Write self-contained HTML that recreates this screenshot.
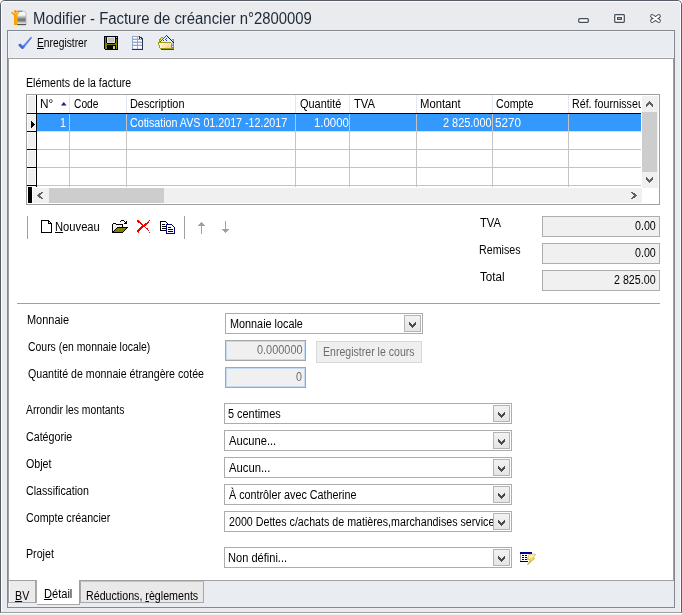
<!DOCTYPE html>
<html><head><meta charset="utf-8">
<style>
*{margin:0;padding:0;box-sizing:border-box}
html,body{width:682px;height:615px;overflow:hidden;background:#fdfdfd}
body{position:relative;font-family:"Liberation Sans",sans-serif;font-size:12px;color:#000}
#root{position:absolute;left:0;top:0;width:682px;height:615px;will-change:transform}
.a{position:absolute}
.t{position:absolute;white-space:nowrap;font-size:12px;line-height:14px;transform:scaleX(0.89);transform-origin:0 0}
.u{text-decoration:underline;text-underline-offset:1px}
.combo{position:absolute;height:21px;border:1px solid #acacb0;background:#fff}
.combo .btn{position:absolute;right:1px;top:1px;width:17px;height:17px;border:1px solid #b4b4b4;background:linear-gradient(#f2f2f2,#e5e5e5)}
.combo .btn svg{position:absolute;left:3px;top:5px}
.ro{position:absolute;height:21px;border:1px solid #abadb3;background:#f0f0f0}
.ro2{position:absolute;height:21px;border:1px solid #a3a6ab;background:#f0f0f0;box-shadow:inset 0 0 0 1px #c4daf2}
.hl{position:absolute;height:1px;background:#c4c4c4}
.vl{position:absolute;width:1px;background:#c4c4c4}
.vh{position:absolute;width:1px;background:#e2e8f0}
.blk{position:absolute;background:#000}
</style></head><body><div id="root">
<!-- window frame -->
<div class="a" style="left:0;top:0;width:682px;height:613px;background:#e9ebef;border:1px solid #565d67;border-bottom-color:#a0a0a0;border-radius:5px 5px 0 0"></div>
<div class="a" style="left:1px;top:1px;width:680px;height:611px;border:1px solid #fbfcfd;border-bottom:0;border-radius:4px 4px 0 0"></div>
<div class="a" style="left:0;top:614px;width:682px;height:1px;background:#efefef"></div>
<!-- title icon -->
<svg class="a" style="left:8px;top:6px" width="20" height="20" viewBox="0 0 20 20"><defs><linearGradient id="dg" x1="0" y1="0" x2="0" y2="1"><stop offset="0" stop-color="#ffffff"/><stop offset="0.3" stop-color="#f2f2f2"/><stop offset="0.5" stop-color="#9a9a9a"/><stop offset="0.65" stop-color="#6a6a6a"/><stop offset="0.85" stop-color="#d0d0d0"/><stop offset="1" stop-color="#eeeeee"/></linearGradient><linearGradient id="og" x1="0" y1="0" x2="1" y2="0"><stop offset="0" stop-color="#f08800"/><stop offset="1" stop-color="#ffbe00"/></linearGradient></defs><path d="M9 5h5.5c2.2 0 3.5 1.3 3.5 3.3V19H9z" fill="url(#dg)" stroke="#b4b4b4" stroke-width="0.8"/><path d="M9.5 5.3h5" stroke="#4f86d0" stroke-width="1"/><path d="M9 18.5h9" stroke="#555" stroke-width="1"/><path d="M3 6.4 L4 5.8 L6 7.6 H8.6 L10.6 5.8 L11.6 6.6 L9.2 9.2 V19 H6 V9.4 Z" fill="url(#og)"/><circle cx="7.4" cy="5.4" r="1.5" fill="#f59a00"/></svg>
<div class="a" style="left:33px;top:10px;font-size:16px;line-height:18px;white-space:nowrap;color:#1f2936;transform:scaleX(0.93);transform-origin:0 0">Modifier - Facture de créancier n°2800009</div>
<!-- title buttons -->
<svg class="a" style="left:577px;top:17px" width="13" height="7"><rect x="1.7" y="1.7" width="9.6" height="3.6" rx="1" fill="#fdfdfd" stroke="#474e5a" stroke-width="1.25"/></svg>
<svg class="a" style="left:613px;top:13px" width="13" height="11"><rect x="1.7" y="1.7" width="9.6" height="7.6" rx="0.8" fill="#f8f9fb" stroke="#474e5a" stroke-width="1.25"/><rect x="4.6" y="4.6" width="3.8" height="1.8" fill="#fff" stroke="#474e5a" stroke-width="1.2"/></svg>
<svg class="a" style="left:649px;top:13px" width="13" height="11"><path d="M3.2 3.2L9.8 7.8M9.8 3.2L3.2 7.8" stroke="#474e5a" stroke-width="4.1" stroke-linecap="round"/><path d="M3.2 3.2L9.8 7.8M9.8 3.2L3.2 7.8" stroke="#fff" stroke-width="2.2" stroke-linecap="round"/></svg>

<!-- inner frame -->
<div class="a" style="left:7px;top:30px;width:668px;height:578px;border:1px solid #84898f;background:#e9ecf0"></div>
<div class="a" style="left:8px;top:31px;width:666px;height:27px;border:1px solid #eff2f7;border-right-color:#eef1f6"></div>
<!-- toolbar -->
<svg class="a" style="left:14px;top:33px" width="22" height="20" viewBox="0 0 22 20"><defs><linearGradient id="cg" x1="0" y1="1" x2="1" y2="0"><stop offset="0" stop-color="#2a48b8"/><stop offset="0.45" stop-color="#5f8cf0"/><stop offset="1" stop-color="#3a64d8"/></linearGradient></defs><path d="M4.2 12.2 C4.6 10.8 6 10.2 7.1 11 L8.7 12.7 L16.6 4.3 C17.3 3.6 18.2 4.2 17.7 5 L9.9 15.3 C9.2 16.2 8.1 16.2 7.4 15.4 Z" fill="url(#cg)"/></svg>
<svg class="a" style="left:104px;top:36px" width="14" height="14" shape-rendering="crispEdges"><rect x="0" y="0" width="14" height="1" fill="#000"/><rect x="0" y="1" width="1" height="1" fill="#000"/><rect x="1" y="1" width="1" height="1" fill="#808000"/><rect x="2" y="1" width="1" height="1" fill="#000"/><rect x="3" y="1" width="8" height="1" fill="#e0e0e0"/><rect x="11" y="1" width="1" height="1" fill="#000"/><rect x="12" y="1" width="1" height="1" fill="#c0c0c0"/><rect x="13" y="1" width="1" height="1" fill="#000"/><rect x="0" y="2" width="1" height="1" fill="#000"/><rect x="1" y="2" width="1" height="1" fill="#808000"/><rect x="2" y="2" width="1" height="1" fill="#000"/><rect x="3" y="2" width="1" height="1" fill="#e0e0e0"/><rect x="4" y="2" width="6" height="1" fill="#c0c0c0"/><rect x="10" y="2" width="1" height="1" fill="#e0e0e0"/><rect x="11" y="2" width="3" height="1" fill="#000"/><rect x="0" y="3" width="1" height="1" fill="#000"/><rect x="1" y="3" width="1" height="1" fill="#808000"/><rect x="2" y="3" width="1" height="1" fill="#000"/><rect x="3" y="3" width="1" height="1" fill="#e0e0e0"/><rect x="4" y="3" width="6" height="1" fill="#c0c0c0"/><rect x="10" y="3" width="1" height="1" fill="#e0e0e0"/><rect x="11" y="3" width="1" height="1" fill="#000"/><rect x="12" y="3" width="1" height="1" fill="#808000"/><rect x="13" y="3" width="1" height="1" fill="#000"/><rect x="0" y="4" width="1" height="1" fill="#000"/><rect x="1" y="4" width="1" height="1" fill="#808000"/><rect x="2" y="4" width="1" height="1" fill="#000"/><rect x="3" y="4" width="1" height="1" fill="#e0e0e0"/><rect x="4" y="4" width="6" height="1" fill="#c0c0c0"/><rect x="10" y="4" width="1" height="1" fill="#e0e0e0"/><rect x="11" y="4" width="1" height="1" fill="#000"/><rect x="12" y="4" width="1" height="1" fill="#808000"/><rect x="13" y="4" width="1" height="1" fill="#000"/><rect x="0" y="5" width="1" height="1" fill="#000"/><rect x="1" y="5" width="1" height="1" fill="#808000"/><rect x="2" y="5" width="1" height="1" fill="#000"/><rect x="3" y="5" width="1" height="1" fill="#e0e0e0"/><rect x="4" y="5" width="6" height="1" fill="#c0c0c0"/><rect x="10" y="5" width="1" height="1" fill="#e0e0e0"/><rect x="11" y="5" width="1" height="1" fill="#000"/><rect x="12" y="5" width="1" height="1" fill="#808000"/><rect x="13" y="5" width="1" height="1" fill="#000"/><rect x="0" y="6" width="1" height="1" fill="#000"/><rect x="1" y="6" width="1" height="1" fill="#808000"/><rect x="2" y="6" width="1" height="1" fill="#000"/><rect x="3" y="6" width="8" height="1" fill="#e0e0e0"/><rect x="11" y="6" width="1" height="1" fill="#000"/><rect x="12" y="6" width="1" height="1" fill="#808000"/><rect x="13" y="6" width="1" height="1" fill="#000"/><rect x="0" y="7" width="1" height="1" fill="#000"/><rect x="1" y="7" width="2" height="1" fill="#808000"/><rect x="3" y="7" width="8" height="1" fill="#000"/><rect x="11" y="7" width="2" height="1" fill="#808000"/><rect x="13" y="7" width="1" height="1" fill="#000"/><rect x="0" y="8" width="1" height="1" fill="#000"/><rect x="1" y="8" width="12" height="1" fill="#808000"/><rect x="13" y="8" width="1" height="1" fill="#000"/><rect x="0" y="9" width="1" height="1" fill="#000"/><rect x="1" y="9" width="2" height="1" fill="#808000"/><rect x="3" y="9" width="9" height="1" fill="#000"/><rect x="12" y="9" width="1" height="1" fill="#808000"/><rect x="13" y="9" width="1" height="1" fill="#000"/><rect x="0" y="10" width="1" height="1" fill="#000"/><rect x="1" y="10" width="2" height="1" fill="#808000"/><rect x="3" y="10" width="6" height="1" fill="#000"/><rect x="9" y="10" width="2" height="1" fill="#c0c0c0"/><rect x="11" y="10" width="1" height="1" fill="#000"/><rect x="12" y="10" width="1" height="1" fill="#808000"/><rect x="13" y="10" width="1" height="1" fill="#000"/><rect x="0" y="11" width="1" height="1" fill="#000"/><rect x="1" y="11" width="2" height="1" fill="#808000"/><rect x="3" y="11" width="6" height="1" fill="#000"/><rect x="9" y="11" width="2" height="1" fill="#c0c0c0"/><rect x="11" y="11" width="1" height="1" fill="#000"/><rect x="12" y="11" width="1" height="1" fill="#808000"/><rect x="13" y="11" width="1" height="1" fill="#000"/><rect x="0" y="12" width="1" height="1" fill="#000"/><rect x="1" y="12" width="2" height="1" fill="#808000"/><rect x="3" y="12" width="6" height="1" fill="#000"/><rect x="9" y="12" width="2" height="1" fill="#c0c0c0"/><rect x="11" y="12" width="1" height="1" fill="#000"/><rect x="12" y="12" width="1" height="1" fill="#808000"/><rect x="13" y="12" width="1" height="1" fill="#000"/><rect x="1" y="13" width="13" height="1" fill="#000"/></svg>
<svg class="a" style="left:132px;top:36px" width="11" height="14" shape-rendering="crispEdges"><rect x="0" y="0" width="7" height="1" fill="#93a6c6"/><rect x="7" y="0" width="1" height="1" fill="#26354f"/><rect x="0" y="1" width="1" height="1" fill="#93a6c6"/><rect x="1" y="1" width="4" height="1" fill="#ffffff"/><rect x="5" y="1" width="1" height="1" fill="#93a6c6"/><rect x="6" y="1" width="1" height="1" fill="#ffffff"/><rect x="7" y="1" width="3" height="1" fill="#26354f"/><rect x="0" y="2" width="1" height="1" fill="#93a6c6"/><rect x="1" y="2" width="4" height="1" fill="#dcdcf6"/><rect x="5" y="2" width="1" height="1" fill="#93a6c6"/><rect x="6" y="2" width="1" height="1" fill="#dcdcf6"/><rect x="7" y="2" width="1" height="1" fill="#26354f"/><rect x="8" y="2" width="1" height="1" fill="#ffffff"/><rect x="9" y="2" width="2" height="1" fill="#26354f"/><rect x="0" y="3" width="10" height="1" fill="#93a6c6"/><rect x="10" y="3" width="1" height="1" fill="#26354f"/><rect x="0" y="4" width="1" height="1" fill="#93a6c6"/><rect x="1" y="4" width="4" height="1" fill="#ffffff"/><rect x="5" y="4" width="1" height="1" fill="#93a6c6"/><rect x="6" y="4" width="4" height="1" fill="#ffffff"/><rect x="10" y="4" width="1" height="1" fill="#26354f"/><rect x="0" y="5" width="1" height="1" fill="#93a6c6"/><rect x="1" y="5" width="4" height="1" fill="#dcdcf6"/><rect x="5" y="5" width="1" height="1" fill="#93a6c6"/><rect x="6" y="5" width="4" height="1" fill="#dcdcf6"/><rect x="10" y="5" width="1" height="1" fill="#26354f"/><rect x="0" y="6" width="10" height="1" fill="#93a6c6"/><rect x="10" y="6" width="1" height="1" fill="#26354f"/><rect x="0" y="7" width="1" height="1" fill="#93a6c6"/><rect x="1" y="7" width="4" height="1" fill="#ffffff"/><rect x="5" y="7" width="1" height="1" fill="#93a6c6"/><rect x="6" y="7" width="4" height="1" fill="#ffffff"/><rect x="10" y="7" width="1" height="1" fill="#26354f"/><rect x="0" y="8" width="1" height="1" fill="#93a6c6"/><rect x="1" y="8" width="4" height="1" fill="#dcdcf6"/><rect x="5" y="8" width="1" height="1" fill="#93a6c6"/><rect x="6" y="8" width="4" height="1" fill="#dcdcf6"/><rect x="10" y="8" width="1" height="1" fill="#26354f"/><rect x="0" y="9" width="10" height="1" fill="#93a6c6"/><rect x="10" y="9" width="1" height="1" fill="#26354f"/><rect x="0" y="10" width="1" height="1" fill="#93a6c6"/><rect x="1" y="10" width="4" height="1" fill="#ffffff"/><rect x="5" y="10" width="1" height="1" fill="#93a6c6"/><rect x="6" y="10" width="4" height="1" fill="#ffffff"/><rect x="10" y="10" width="1" height="1" fill="#26354f"/><rect x="0" y="11" width="1" height="1" fill="#93a6c6"/><rect x="1" y="11" width="4" height="1" fill="#ffffff"/><rect x="5" y="11" width="1" height="1" fill="#93a6c6"/><rect x="6" y="11" width="4" height="1" fill="#ffffff"/><rect x="10" y="11" width="1" height="1" fill="#26354f"/><rect x="0" y="12" width="1" height="1" fill="#93a6c6"/><rect x="1" y="12" width="4" height="1" fill="#dcdcf6"/><rect x="5" y="12" width="1" height="1" fill="#93a6c6"/><rect x="6" y="12" width="4" height="1" fill="#dcdcf6"/><rect x="10" y="12" width="1" height="1" fill="#26354f"/><rect x="0" y="13" width="11" height="1" fill="#26354f"/></svg>
<svg class="a" style="left:158px;top:35px" width="16" height="15" shape-rendering="crispEdges"><rect x="8" y="0" width="1" height="1" fill="#3a3acc"/><rect x="7" y="1" width="1" height="1" fill="#3a3acc"/><rect x="8" y="1" width="1" height="1" fill="#dcf6ff"/><rect x="9" y="1" width="1" height="1" fill="#101010"/><rect x="3" y="2" width="2" height="1" fill="#9c9c10"/><rect x="6" y="2" width="1" height="1" fill="#3a3acc"/><rect x="7" y="2" width="3" height="1" fill="#dcf6ff"/><rect x="10" y="2" width="1" height="1" fill="#101010"/><rect x="2" y="3" width="1" height="1" fill="#9c9c10"/><rect x="3" y="3" width="2" height="1" fill="#f4e878"/><rect x="5" y="3" width="1" height="1" fill="#3a3acc"/><rect x="6" y="3" width="2" height="1" fill="#dcf6ff"/><rect x="8" y="3" width="1" height="1" fill="#3a3acc"/><rect x="9" y="3" width="2" height="1" fill="#dcf6ff"/><rect x="11" y="3" width="1" height="1" fill="#101010"/><rect x="1" y="4" width="2" height="1" fill="#9c9c10"/><rect x="3" y="4" width="1" height="1" fill="#f4e878"/><rect x="4" y="4" width="1" height="1" fill="#3a3acc"/><rect x="5" y="4" width="2" height="1" fill="#dcf6ff"/><rect x="7" y="4" width="1" height="1" fill="#3a3acc"/><rect x="8" y="4" width="4" height="1" fill="#dcf6ff"/><rect x="12" y="4" width="1" height="1" fill="#101010"/><rect x="14" y="4" width="2" height="1" fill="#9c9c10"/><rect x="1" y="5" width="1" height="1" fill="#9c9c10"/><rect x="2" y="5" width="1" height="1" fill="#f4e878"/><rect x="3" y="5" width="1" height="1" fill="#3a3acc"/><rect x="4" y="5" width="1" height="1" fill="#dcf6ff"/><rect x="5" y="5" width="1" height="1" fill="#3a3acc"/><rect x="6" y="5" width="2" height="1" fill="#dcf6ff"/><rect x="8" y="5" width="1" height="1" fill="#3a3acc"/><rect x="9" y="5" width="4" height="1" fill="#dcf6ff"/><rect x="13" y="5" width="1" height="1" fill="#101010"/><rect x="15" y="5" width="1" height="1" fill="#9c9c10"/><rect x="1" y="6" width="1" height="1" fill="#9c9c10"/><rect x="2" y="6" width="1" height="1" fill="#3a3acc"/><rect x="3" y="6" width="11" height="1" fill="#dcf6ff"/><rect x="14" y="6" width="1" height="1" fill="#101010"/><rect x="15" y="6" width="1" height="1" fill="#9c9c10"/><rect x="0" y="7" width="13" height="1" fill="#9c9c10"/><rect x="13" y="7" width="1" height="1" fill="#dcf6ff"/><rect x="14" y="7" width="1" height="1" fill="#c8c8f8"/><rect x="15" y="7" width="1" height="1" fill="#101010"/><rect x="0" y="8" width="1" height="1" fill="#9c9c10"/><rect x="1" y="8" width="6" height="1" fill="#fff6c0"/><rect x="7" y="8" width="1" height="1" fill="#fcd8a8"/><rect x="8" y="8" width="1" height="1" fill="#fff6c0"/><rect x="9" y="8" width="1" height="1" fill="#fcd8a8"/><rect x="10" y="8" width="1" height="1" fill="#fff6c0"/><rect x="11" y="8" width="1" height="1" fill="#fcd8a8"/><rect x="12" y="8" width="1" height="1" fill="#fff6c0"/><rect x="13" y="8" width="1" height="1" fill="#9c9c10"/><rect x="14" y="8" width="1" height="1" fill="#c8c8f8"/><rect x="15" y="8" width="1" height="1" fill="#9c9c10"/><rect x="0" y="9" width="1" height="1" fill="#9c9c10"/><rect x="1" y="9" width="5" height="1" fill="#fff6c0"/><rect x="6" y="9" width="1" height="1" fill="#fcd8a8"/><rect x="7" y="9" width="1" height="1" fill="#fff6c0"/><rect x="8" y="9" width="1" height="1" fill="#fcd8a8"/><rect x="9" y="9" width="1" height="1" fill="#fff6c0"/><rect x="10" y="9" width="2" height="1" fill="#fcd8a8"/><rect x="12" y="9" width="1" height="1" fill="#fff6c0"/><rect x="13" y="9" width="1" height="1" fill="#9c9c10"/><rect x="14" y="9" width="1" height="1" fill="#c8c8f8"/><rect x="15" y="9" width="1" height="1" fill="#9c9c10"/><rect x="1" y="10" width="1" height="1" fill="#9c9c10"/><rect x="2" y="10" width="3" height="1" fill="#fff6c0"/><rect x="5" y="10" width="1" height="1" fill="#fcd8a8"/><rect x="6" y="10" width="1" height="1" fill="#fff6c0"/><rect x="7" y="10" width="1" height="1" fill="#fcd8a8"/><rect x="8" y="10" width="1" height="1" fill="#fff6c0"/><rect x="9" y="10" width="4" height="1" fill="#fcd8a8"/><rect x="13" y="10" width="3" height="1" fill="#9c9c10"/><rect x="1" y="11" width="1" height="1" fill="#9c9c10"/><rect x="2" y="11" width="2" height="1" fill="#fff6c0"/><rect x="4" y="11" width="1" height="1" fill="#fcd8a8"/><rect x="5" y="11" width="1" height="1" fill="#fff6c0"/><rect x="6" y="11" width="1" height="1" fill="#fcd8a8"/><rect x="7" y="11" width="1" height="1" fill="#fff6c0"/><rect x="8" y="11" width="5" height="1" fill="#fcd8a8"/><rect x="13" y="11" width="1" height="1" fill="#9c9c10"/><rect x="15" y="11" width="1" height="1" fill="#9c9c10"/><rect x="1" y="12" width="1" height="1" fill="#9c9c10"/><rect x="2" y="12" width="3" height="1" fill="#fff6c0"/><rect x="5" y="12" width="1" height="1" fill="#fcd8a8"/><rect x="6" y="12" width="1" height="1" fill="#fff6c0"/><rect x="7" y="12" width="6" height="1" fill="#fcd8a8"/><rect x="13" y="12" width="3" height="1" fill="#9c9c10"/><rect x="2" y="13" width="14" height="1" fill="#9c9c10"/><rect x="3" y="14" width="13" height="1" fill="#4c4c08"/></svg>

<!-- client area -->
<div class="a" style="left:8px;top:58px;width:666px;height:523px;border:1px solid #a0a0a0;background:#fff"></div>

<!-- grid -->
<div class="a" style="left:26px;top:94px;width:634px;height:111px;border:1px solid #a0a0a0;background:#fff"></div>
<div class="a" style="left:27px;top:95px;width:9px;height:92px;background:#f0f0f0"></div>
<div class="a" style="left:27px;top:95px;width:9px;height:18px;border-left:1px solid #fff;border-top:1px solid #fff;border-right:1px solid #fafafa;border-bottom:1px solid #fafafa"></div>
<div class="a" style="left:27px;top:114px;width:9px;height:17px;border-left:1px solid #fff;border-top:1px solid #fff;border-right:1px solid #fafafa;border-bottom:1px solid #fafafa"></div>
<div class="a" style="left:27px;top:132px;width:9px;height:17px;border-left:1px solid #fff;border-top:1px solid #fff;border-right:1px solid #fafafa;border-bottom:1px solid #fafafa"></div>
<div class="a" style="left:27px;top:150px;width:9px;height:17px;border-left:1px solid #fff;border-top:1px solid #fff;border-right:1px solid #fafafa;border-bottom:1px solid #fafafa"></div>
<div class="a" style="left:27px;top:168px;width:9px;height:17px;border-left:1px solid #fff;border-top:1px solid #fff;border-right:1px solid #fafafa;border-bottom:1px solid #fafafa"></div>
<div class="blk" style="left:36px;top:95px;width:1px;height:92px"></div>
<div class="blk" style="left:27px;top:113px;width:614px;height:1px"></div>
<div class="blk" style="left:27px;top:131px;width:10px;height:1px"></div>
<div class="blk" style="left:27px;top:149px;width:10px;height:1px"></div>
<div class="blk" style="left:27px;top:167px;width:10px;height:1px"></div>
<div class="blk" style="left:27px;top:185px;width:10px;height:1px"></div>
<div class="a" style="left:37px;top:114px;width:604px;height:17px;background:#3399ff"></div>
<svg class="a" style="left:31px;top:121px" width="5" height="7" shape-rendering="crispEdges"><rect x="0" y="0" width="1" height="1" fill="#000"/><rect x="0" y="1" width="2" height="1" fill="#000"/><rect x="0" y="2" width="3" height="1" fill="#000"/><rect x="0" y="3" width="4" height="1" fill="#000"/><rect x="0" y="4" width="3" height="1" fill="#000"/><rect x="0" y="5" width="2" height="1" fill="#000"/><rect x="0" y="6" width="1" height="1" fill="#000"/></svg>
<div class="hl" style="left:37px;top:131px;width:604px;background:#e0dcd8"></div>
<div class="hl" style="left:37px;top:149px;width:604px"></div>
<div class="hl" style="left:37px;top:167px;width:604px"></div>
<div class="hl" style="left:37px;top:185px;width:604px"></div>
<div class="vh" style="left:69px;top:95px;height:18px"></div>
<div class="vh" style="left:126px;top:95px;height:18px"></div>
<div class="vh" style="left:295px;top:95px;height:18px"></div>
<div class="vh" style="left:349px;top:95px;height:18px"></div>
<div class="vh" style="left:416px;top:95px;height:18px"></div>
<div class="vh" style="left:492px;top:95px;height:18px"></div>
<div class="vh" style="left:568px;top:95px;height:18px"></div>
<div class="vl" style="left:69px;top:114px;height:73px"></div>
<div class="vl" style="left:126px;top:114px;height:73px"></div>
<div class="vl" style="left:295px;top:114px;height:73px"></div>
<div class="vl" style="left:349px;top:114px;height:73px"></div>
<div class="vl" style="left:416px;top:114px;height:73px"></div>
<div class="vl" style="left:492px;top:114px;height:73px"></div>
<div class="vl" style="left:568px;top:114px;height:73px"></div>
<svg class="a" style="left:61px;top:102px" width="6" height="4"><path d="M0 3.5h5.5L2.75 0z" fill="#1a1a8a"/></svg>
<div class="a" style="left:569px;top:95px;width:72px;height:18px;overflow:hidden"><div class="t" style="left:3px;top:2px">Réf. fournisseur</div></div>
<!-- vertical scrollbar -->
<div class="a" style="left:642px;top:96px;width:16px;height:92px;background:#f0f0f0"></div>
<div class="a" style="left:642px;top:112px;width:15px;height:60px;background:#cdcdcd"></div>
<svg class="a" style="left:646px;top:101px" width="7" height="6" shape-rendering="crispEdges"><rect x="3" y="0" width="1" height="1" fill="#606060"/><rect x="2" y="1" width="3" height="1" fill="#606060"/><rect x="1" y="2" width="5" height="1" fill="#606060"/><rect x="0" y="3" width="3" height="1" fill="#606060"/><rect x="4" y="3" width="3" height="1" fill="#606060"/><rect x="0" y="4" width="2" height="1" fill="#606060"/><rect x="5" y="4" width="2" height="1" fill="#606060"/><rect x="0" y="5" width="1" height="1" fill="#606060"/><rect x="6" y="5" width="1" height="1" fill="#606060"/></svg>
<svg class="a" style="left:646px;top:177px" width="7" height="6" shape-rendering="crispEdges"><rect x="0" y="0" width="1" height="1" fill="#606060"/><rect x="6" y="0" width="1" height="1" fill="#606060"/><rect x="0" y="1" width="2" height="1" fill="#606060"/><rect x="5" y="1" width="2" height="1" fill="#606060"/><rect x="0" y="2" width="3" height="1" fill="#606060"/><rect x="4" y="2" width="3" height="1" fill="#606060"/><rect x="1" y="3" width="5" height="1" fill="#606060"/><rect x="2" y="4" width="3" height="1" fill="#606060"/><rect x="3" y="5" width="1" height="1" fill="#606060"/></svg>
<!-- horizontal scrollbar -->
<div class="a" style="left:33px;top:188px;width:609px;height:15px;background:#f0f0f0"></div>
<div class="a" style="left:27px;top:187px;width:6px;height:17px;background:#fff"></div><div class="blk" style="left:28px;top:187px;width:4px;height:16px"></div>
<div class="a" style="left:49px;top:188px;width:115px;height:15px;background:#cdcdcd"></div>
<svg class="a" style="left:37px;top:192px" width="6" height="7" shape-rendering="crispEdges"><rect x="4" y="0" width="2" height="1" fill="#606060"/><rect x="2" y="1" width="3" height="1" fill="#606060"/><rect x="1" y="2" width="3" height="1" fill="#606060"/><rect x="0" y="3" width="3" height="1" fill="#606060"/><rect x="1" y="4" width="3" height="1" fill="#606060"/><rect x="2" y="5" width="3" height="1" fill="#606060"/><rect x="4" y="6" width="2" height="1" fill="#606060"/></svg>
<svg class="a" style="left:631px;top:192px" width="6" height="7" shape-rendering="crispEdges"><rect x="0" y="0" width="2" height="1" fill="#606060"/><rect x="1" y="1" width="3" height="1" fill="#606060"/><rect x="2" y="2" width="3" height="1" fill="#606060"/><rect x="3" y="3" width="3" height="1" fill="#606060"/><rect x="2" y="4" width="3" height="1" fill="#606060"/><rect x="1" y="5" width="3" height="1" fill="#606060"/><rect x="0" y="6" width="2" height="1" fill="#606060"/></svg>

<!-- grid toolbar -->
<div class="a" style="left:27px;top:216px;width:1px;height:23px;background:#a0a0a0"></div>
<svg class="a" style="left:41px;top:220px" width="11" height="13" shape-rendering="crispEdges"><rect x="0" y="0" width="8" height="1" fill="#000"/><rect x="8" y="0" width="3" height="1" fill="#fff"/><rect x="0" y="1" width="1" height="1" fill="#000"/><rect x="1" y="1" width="6" height="1" fill="#fff"/><rect x="7" y="1" width="2" height="1" fill="#000"/><rect x="9" y="1" width="2" height="1" fill="#fff"/><rect x="0" y="2" width="1" height="1" fill="#000"/><rect x="1" y="2" width="6" height="1" fill="#fff"/><rect x="7" y="2" width="1" height="1" fill="#000"/><rect x="8" y="2" width="1" height="1" fill="#fff"/><rect x="9" y="2" width="1" height="1" fill="#000"/><rect x="10" y="2" width="1" height="1" fill="#fff"/><rect x="0" y="3" width="1" height="1" fill="#000"/><rect x="1" y="3" width="6" height="1" fill="#fff"/><rect x="7" y="3" width="4" height="1" fill="#000"/><rect x="0" y="4" width="1" height="1" fill="#000"/><rect x="1" y="4" width="9" height="1" fill="#fff"/><rect x="10" y="4" width="1" height="1" fill="#000"/><rect x="0" y="5" width="1" height="1" fill="#000"/><rect x="1" y="5" width="9" height="1" fill="#fff"/><rect x="10" y="5" width="1" height="1" fill="#000"/><rect x="0" y="6" width="1" height="1" fill="#000"/><rect x="1" y="6" width="9" height="1" fill="#fff"/><rect x="10" y="6" width="1" height="1" fill="#000"/><rect x="0" y="7" width="1" height="1" fill="#000"/><rect x="1" y="7" width="9" height="1" fill="#fff"/><rect x="10" y="7" width="1" height="1" fill="#000"/><rect x="0" y="8" width="1" height="1" fill="#000"/><rect x="1" y="8" width="9" height="1" fill="#fff"/><rect x="10" y="8" width="1" height="1" fill="#000"/><rect x="0" y="9" width="1" height="1" fill="#000"/><rect x="1" y="9" width="9" height="1" fill="#fff"/><rect x="10" y="9" width="1" height="1" fill="#000"/><rect x="0" y="10" width="1" height="1" fill="#000"/><rect x="1" y="10" width="9" height="1" fill="#fff"/><rect x="10" y="10" width="1" height="1" fill="#000"/><rect x="0" y="11" width="1" height="1" fill="#000"/><rect x="1" y="11" width="9" height="1" fill="#fff"/><rect x="10" y="11" width="1" height="1" fill="#000"/><rect x="0" y="12" width="11" height="1" fill="#000"/></svg>
<svg class="a" style="left:112px;top:220px" width="16" height="13" shape-rendering="crispEdges"><rect x="9" y="0" width="3" height="1" fill="#000"/><rect x="8" y="1" width="1" height="1" fill="#000"/><rect x="12" y="1" width="1" height="1" fill="#000"/><rect x="14" y="1" width="1" height="1" fill="#000"/><rect x="13" y="2" width="2" height="1" fill="#000"/><rect x="1" y="3" width="3" height="1" fill="#000"/><rect x="12" y="3" width="3" height="1" fill="#000"/><rect x="0" y="4" width="1" height="1" fill="#000"/><rect x="1" y="4" width="1" height="1" fill="#ffff00"/><rect x="2" y="4" width="1" height="1" fill="#ffffff"/><rect x="3" y="4" width="1" height="1" fill="#ffff00"/><rect x="4" y="4" width="7" height="1" fill="#000"/><rect x="0" y="5" width="1" height="1" fill="#000"/><rect x="1" y="5" width="1" height="1" fill="#ffffff"/><rect x="2" y="5" width="1" height="1" fill="#ffff00"/><rect x="3" y="5" width="1" height="1" fill="#ffffff"/><rect x="4" y="5" width="1" height="1" fill="#ffff00"/><rect x="5" y="5" width="1" height="1" fill="#ffffff"/><rect x="6" y="5" width="1" height="1" fill="#ffff00"/><rect x="7" y="5" width="1" height="1" fill="#ffffff"/><rect x="8" y="5" width="1" height="1" fill="#ffff00"/><rect x="9" y="5" width="1" height="1" fill="#ffffff"/><rect x="10" y="5" width="1" height="1" fill="#000"/><rect x="0" y="6" width="1" height="1" fill="#000"/><rect x="1" y="6" width="1" height="1" fill="#ffff00"/><rect x="2" y="6" width="1" height="1" fill="#ffffff"/><rect x="3" y="6" width="1" height="1" fill="#ffff00"/><rect x="4" y="6" width="1" height="1" fill="#ffffff"/><rect x="5" y="6" width="1" height="1" fill="#ffff00"/><rect x="6" y="6" width="1" height="1" fill="#ffffff"/><rect x="7" y="6" width="1" height="1" fill="#ffff00"/><rect x="8" y="6" width="1" height="1" fill="#ffffff"/><rect x="9" y="6" width="1" height="1" fill="#ffff00"/><rect x="10" y="6" width="1" height="1" fill="#000"/><rect x="0" y="7" width="1" height="1" fill="#000"/><rect x="1" y="7" width="1" height="1" fill="#ffffff"/><rect x="2" y="7" width="1" height="1" fill="#ffff00"/><rect x="3" y="7" width="1" height="1" fill="#ffffff"/><rect x="4" y="7" width="1" height="1" fill="#ffff00"/><rect x="5" y="7" width="11" height="1" fill="#000"/><rect x="0" y="8" width="1" height="1" fill="#000"/><rect x="1" y="8" width="1" height="1" fill="#ffff00"/><rect x="2" y="8" width="1" height="1" fill="#ffffff"/><rect x="3" y="8" width="1" height="1" fill="#ffff00"/><rect x="4" y="8" width="1" height="1" fill="#000"/><rect x="5" y="8" width="9" height="1" fill="#808000"/><rect x="14" y="8" width="1" height="1" fill="#000"/><rect x="0" y="9" width="1" height="1" fill="#000"/><rect x="1" y="9" width="1" height="1" fill="#ffffff"/><rect x="2" y="9" width="1" height="1" fill="#ffff00"/><rect x="3" y="9" width="1" height="1" fill="#000"/><rect x="4" y="9" width="9" height="1" fill="#808000"/><rect x="13" y="9" width="1" height="1" fill="#000"/><rect x="0" y="10" width="1" height="1" fill="#000"/><rect x="1" y="10" width="1" height="1" fill="#ffff00"/><rect x="2" y="10" width="1" height="1" fill="#000"/><rect x="3" y="10" width="9" height="1" fill="#808000"/><rect x="12" y="10" width="1" height="1" fill="#000"/><rect x="0" y="11" width="2" height="1" fill="#000"/><rect x="2" y="11" width="9" height="1" fill="#808000"/><rect x="11" y="11" width="1" height="1" fill="#000"/><rect x="0" y="12" width="11" height="1" fill="#000"/></svg>
<svg class="a" style="left:137px;top:220px" width="13" height="13" shape-rendering="crispEdges"><rect x="0" y="0" width="2" height="1" fill="#f00000"/><rect x="12" y="0" width="1" height="1" fill="#a00000"/><rect x="0" y="1" width="3" height="1" fill="#f00000"/><rect x="11" y="1" width="1" height="1" fill="#f00000"/><rect x="1" y="2" width="3" height="1" fill="#f00000"/><rect x="10" y="2" width="2" height="1" fill="#f00000"/><rect x="3" y="3" width="2" height="1" fill="#f00000"/><rect x="8" y="3" width="3" height="1" fill="#f00000"/><rect x="4" y="4" width="2" height="1" fill="#f00000"/><rect x="7" y="4" width="3" height="1" fill="#f00000"/><rect x="5" y="5" width="4" height="1" fill="#f00000"/><rect x="4" y="6" width="4" height="1" fill="#f00000"/><rect x="3" y="7" width="3" height="1" fill="#f00000"/><rect x="8" y="7" width="1" height="1" fill="#f00000"/><rect x="2" y="8" width="3" height="1" fill="#f00000"/><rect x="9" y="8" width="2" height="1" fill="#f00000"/><rect x="1" y="9" width="3" height="1" fill="#f00000"/><rect x="10" y="9" width="1" height="1" fill="#f00000"/><rect x="0" y="10" width="3" height="1" fill="#f00000"/><rect x="11" y="10" width="1" height="1" fill="#f00000"/><rect x="0" y="11" width="2" height="1" fill="#f00000"/><rect x="1" y="12" width="1" height="1" fill="#f00000"/><rect x="12" y="12" width="1" height="1" fill="#f00000"/></svg>
<svg class="a" style="left:160px;top:221px" width="15" height="13" shape-rendering="crispEdges"><rect x="0" y="0" width="6" height="1" fill="#000"/><rect x="6" y="0" width="9" height="1" fill="#fff"/><rect x="0" y="1" width="1" height="1" fill="#000"/><rect x="1" y="1" width="5" height="1" fill="#fff"/><rect x="6" y="1" width="1" height="1" fill="#000"/><rect x="7" y="1" width="8" height="1" fill="#fff"/><rect x="0" y="2" width="1" height="1" fill="#000"/><rect x="1" y="2" width="6" height="1" fill="#fff"/><rect x="7" y="2" width="1" height="1" fill="#000"/><rect x="8" y="2" width="7" height="1" fill="#fff"/><rect x="0" y="3" width="1" height="1" fill="#000"/><rect x="1" y="3" width="1" height="1" fill="#fff"/><rect x="2" y="3" width="3" height="1" fill="#000"/><rect x="5" y="3" width="1" height="1" fill="#fff"/><rect x="6" y="3" width="6" height="1" fill="#000080"/><rect x="12" y="3" width="3" height="1" fill="#fff"/><rect x="0" y="4" width="1" height="1" fill="#000"/><rect x="1" y="4" width="5" height="1" fill="#fff"/><rect x="6" y="4" width="1" height="1" fill="#000080"/><rect x="7" y="4" width="5" height="1" fill="#fff"/><rect x="12" y="4" width="1" height="1" fill="#000080"/><rect x="13" y="4" width="2" height="1" fill="#fff"/><rect x="0" y="5" width="1" height="1" fill="#000"/><rect x="1" y="5" width="1" height="1" fill="#fff"/><rect x="2" y="5" width="4" height="1" fill="#000"/><rect x="6" y="5" width="1" height="1" fill="#000080"/><rect x="7" y="5" width="6" height="1" fill="#fff"/><rect x="13" y="5" width="1" height="1" fill="#000080"/><rect x="14" y="5" width="1" height="1" fill="#fff"/><rect x="0" y="6" width="1" height="1" fill="#000"/><rect x="1" y="6" width="5" height="1" fill="#fff"/><rect x="6" y="6" width="1" height="1" fill="#000080"/><rect x="7" y="6" width="1" height="1" fill="#fff"/><rect x="8" y="6" width="3" height="1" fill="#000"/><rect x="11" y="6" width="3" height="1" fill="#fff"/><rect x="14" y="6" width="1" height="1" fill="#000080"/><rect x="0" y="7" width="1" height="1" fill="#000"/><rect x="1" y="7" width="1" height="1" fill="#fff"/><rect x="2" y="7" width="4" height="1" fill="#000"/><rect x="6" y="7" width="1" height="1" fill="#000080"/><rect x="7" y="7" width="7" height="1" fill="#fff"/><rect x="14" y="7" width="1" height="1" fill="#000080"/><rect x="0" y="8" width="1" height="1" fill="#000"/><rect x="1" y="8" width="5" height="1" fill="#fff"/><rect x="6" y="8" width="1" height="1" fill="#000080"/><rect x="7" y="8" width="1" height="1" fill="#fff"/><rect x="8" y="8" width="5" height="1" fill="#000"/><rect x="13" y="8" width="1" height="1" fill="#fff"/><rect x="14" y="8" width="1" height="1" fill="#000080"/><rect x="0" y="9" width="6" height="1" fill="#000"/><rect x="6" y="9" width="1" height="1" fill="#000080"/><rect x="7" y="9" width="7" height="1" fill="#fff"/><rect x="14" y="9" width="1" height="1" fill="#000080"/><rect x="0" y="10" width="6" height="1" fill="#fff"/><rect x="6" y="10" width="1" height="1" fill="#000080"/><rect x="7" y="10" width="1" height="1" fill="#fff"/><rect x="8" y="10" width="5" height="1" fill="#000"/><rect x="13" y="10" width="1" height="1" fill="#fff"/><rect x="14" y="10" width="1" height="1" fill="#000080"/><rect x="0" y="11" width="6" height="1" fill="#fff"/><rect x="6" y="11" width="1" height="1" fill="#000080"/><rect x="7" y="11" width="7" height="1" fill="#fff"/><rect x="14" y="11" width="1" height="1" fill="#000080"/><rect x="0" y="12" width="6" height="1" fill="#fff"/><rect x="6" y="12" width="9" height="1" fill="#000080"/></svg>
<div class="a" style="left:184px;top:216px;width:1px;height:23px;background:#a0a0a0"></div>
<svg class="a" style="left:198px;top:222px" width="7" height="12" shape-rendering="crispEdges"><rect x="3" y="0" width="1" height="1" fill="#a0a0a0"/><rect x="2" y="1" width="3" height="1" fill="#a0a0a0"/><rect x="1" y="2" width="5" height="1" fill="#a0a0a0"/><rect x="0" y="3" width="7" height="1" fill="#a0a0a0"/><rect x="3" y="4" width="1" height="1" fill="#a0a0a0"/><rect x="3" y="5" width="1" height="1" fill="#a0a0a0"/><rect x="3" y="6" width="1" height="1" fill="#a0a0a0"/><rect x="3" y="7" width="1" height="1" fill="#a0a0a0"/><rect x="3" y="8" width="1" height="1" fill="#a0a0a0"/><rect x="3" y="9" width="1" height="1" fill="#a0a0a0"/><rect x="3" y="10" width="1" height="1" fill="#a0a0a0"/><rect x="3" y="11" width="1" height="1" fill="#a0a0a0"/></svg>
<svg class="a" style="left:222px;top:221px" width="7" height="12" shape-rendering="crispEdges"><rect x="3" y="0" width="1" height="1" fill="#a0a0a0"/><rect x="3" y="1" width="1" height="1" fill="#a0a0a0"/><rect x="3" y="2" width="1" height="1" fill="#a0a0a0"/><rect x="3" y="3" width="1" height="1" fill="#a0a0a0"/><rect x="3" y="4" width="1" height="1" fill="#a0a0a0"/><rect x="3" y="5" width="1" height="1" fill="#a0a0a0"/><rect x="3" y="6" width="1" height="1" fill="#a0a0a0"/><rect x="3" y="7" width="1" height="1" fill="#a0a0a0"/><rect x="0" y="8" width="7" height="1" fill="#a0a0a0"/><rect x="1" y="9" width="5" height="1" fill="#a0a0a0"/><rect x="2" y="10" width="3" height="1" fill="#a0a0a0"/><rect x="3" y="11" width="1" height="1" fill="#a0a0a0"/></svg>

<!-- totals -->
<div class="ro" style="left:542px;top:216px;width:118px"></div>
<div class="ro" style="left:542px;top:243px;width:118px"></div>
<div class="ro" style="left:542px;top:270px;width:118px"></div>

<div class="a" style="left:17px;top:303px;width:643px;height:1px;background:#a0a0a0"></div>

<!-- form -->
<div class="combo" style="left:225px;top:313px;width:198px"><div class="btn"></div></div>
<div class="ro2" style="left:225px;top:340px;width:81px"></div>
<div class="a" style="left:316px;top:341px;width:106px;height:22px;border:1px solid #d8d8d8;background:#efefef"></div>
<div class="ro2" style="left:225px;top:367px;width:81px"></div>

<div class="combo" style="left:224px;top:403px;width:288px"><div class="btn"></div></div>
<div class="combo" style="left:224px;top:430px;width:288px"><div class="btn"></div></div>
<div class="combo" style="left:224px;top:457px;width:288px"><div class="btn"></div></div>
<div class="combo" style="left:224px;top:484px;width:288px"><div class="btn"></div></div>
<div class="combo" style="left:224px;top:511px;width:288px"><div class="a" style="left:0;top:0;width:268px;height:19px;overflow:hidden"><div class="t" style="left:4px;top:3px">2000 Dettes c/achats de matières,marchandises services</div></div><div class="btn"></div></div>
<div class="combo" style="left:224px;top:547px;width:288px"><div class="btn"></div></div>
<svg class="a" style="left:520px;top:552px" width="16" height="13" viewBox="0 0 16 13"><defs><linearGradient id="lg" x1="0" y1="0" x2="0" y2="1"><stop offset="0" stop-color="#fffbd0"/><stop offset="0.5" stop-color="#ffe060"/><stop offset="1" stop-color="#e0a800"/></linearGradient></defs><g shape-rendering="crispEdges"><rect x="0" y="0" width="12" height="2" fill="#000088"/><rect x="0" y="2" width="1" height="7" fill="#9a9a9a"/><rect x="1" y="2" width="7" height="7" fill="#fff"/><rect x="0" y="9" width="8" height="1" fill="#000"/><rect x="2" y="3" width="2" height="1" fill="#000"/><rect x="5" y="3" width="2" height="1" fill="#000"/><rect x="2" y="5" width="2" height="1" fill="#000"/><rect x="5" y="5" width="2" height="1" fill="#000"/><rect x="2" y="7" width="2" height="1" fill="#000"/><rect x="5" y="7" width="2" height="1" fill="#000"/></g><path d="M9 2.2h6.5L12.6 6.6h2L7.5 12.8 10.6 7.6H7.2z" fill="url(#lg)" stroke="#b08a20" stroke-width="0.5"/></svg>

<!-- tabs -->
<div class="a" style="left:8px;top:581px;width:29px;height:22px;background:#ebebeb;border-left:1px solid #a0a0a0;border-right:2px solid #a8a8a8;border-bottom:1px solid #a8a8a8;box-shadow:inset 1px 0 0 #f8f8f8"></div>
<div class="a" style="left:37px;top:580px;width:43px;height:25px;background:#fff;border-right:1px solid #a0a0a0;border-bottom:1px solid #a8a8a8"></div>
<div class="a" style="left:80px;top:581px;width:124px;height:22px;background:#e9e9e9;border-left:1px solid #a8a8a8;border-right:1px solid #a8a8a8;border-bottom:1px solid #a8a8a8;border-top:1px solid #a6c8ee"></div>
<svg class="a" style="left:409px;top:322px" width="7" height="6" shape-rendering="crispEdges"><rect x="0" y="0" width="1" height="1" fill="#4b4b4b"/><rect x="6" y="0" width="1" height="1" fill="#4b4b4b"/><rect x="0" y="1" width="2" height="1" fill="#4b4b4b"/><rect x="5" y="1" width="2" height="1" fill="#4b4b4b"/><rect x="0" y="2" width="3" height="1" fill="#4b4b4b"/><rect x="4" y="2" width="3" height="1" fill="#4b4b4b"/><rect x="1" y="3" width="5" height="1" fill="#4b4b4b"/><rect x="2" y="4" width="3" height="1" fill="#4b4b4b"/><rect x="3" y="5" width="1" height="1" fill="#4b4b4b"/></svg><svg class="a" style="left:498px;top:412px" width="7" height="6" shape-rendering="crispEdges"><rect x="0" y="0" width="1" height="1" fill="#4b4b4b"/><rect x="6" y="0" width="1" height="1" fill="#4b4b4b"/><rect x="0" y="1" width="2" height="1" fill="#4b4b4b"/><rect x="5" y="1" width="2" height="1" fill="#4b4b4b"/><rect x="0" y="2" width="3" height="1" fill="#4b4b4b"/><rect x="4" y="2" width="3" height="1" fill="#4b4b4b"/><rect x="1" y="3" width="5" height="1" fill="#4b4b4b"/><rect x="2" y="4" width="3" height="1" fill="#4b4b4b"/><rect x="3" y="5" width="1" height="1" fill="#4b4b4b"/></svg><svg class="a" style="left:498px;top:439px" width="7" height="6" shape-rendering="crispEdges"><rect x="0" y="0" width="1" height="1" fill="#4b4b4b"/><rect x="6" y="0" width="1" height="1" fill="#4b4b4b"/><rect x="0" y="1" width="2" height="1" fill="#4b4b4b"/><rect x="5" y="1" width="2" height="1" fill="#4b4b4b"/><rect x="0" y="2" width="3" height="1" fill="#4b4b4b"/><rect x="4" y="2" width="3" height="1" fill="#4b4b4b"/><rect x="1" y="3" width="5" height="1" fill="#4b4b4b"/><rect x="2" y="4" width="3" height="1" fill="#4b4b4b"/><rect x="3" y="5" width="1" height="1" fill="#4b4b4b"/></svg><svg class="a" style="left:498px;top:466px" width="7" height="6" shape-rendering="crispEdges"><rect x="0" y="0" width="1" height="1" fill="#4b4b4b"/><rect x="6" y="0" width="1" height="1" fill="#4b4b4b"/><rect x="0" y="1" width="2" height="1" fill="#4b4b4b"/><rect x="5" y="1" width="2" height="1" fill="#4b4b4b"/><rect x="0" y="2" width="3" height="1" fill="#4b4b4b"/><rect x="4" y="2" width="3" height="1" fill="#4b4b4b"/><rect x="1" y="3" width="5" height="1" fill="#4b4b4b"/><rect x="2" y="4" width="3" height="1" fill="#4b4b4b"/><rect x="3" y="5" width="1" height="1" fill="#4b4b4b"/></svg><svg class="a" style="left:498px;top:493px" width="7" height="6" shape-rendering="crispEdges"><rect x="0" y="0" width="1" height="1" fill="#4b4b4b"/><rect x="6" y="0" width="1" height="1" fill="#4b4b4b"/><rect x="0" y="1" width="2" height="1" fill="#4b4b4b"/><rect x="5" y="1" width="2" height="1" fill="#4b4b4b"/><rect x="0" y="2" width="3" height="1" fill="#4b4b4b"/><rect x="4" y="2" width="3" height="1" fill="#4b4b4b"/><rect x="1" y="3" width="5" height="1" fill="#4b4b4b"/><rect x="2" y="4" width="3" height="1" fill="#4b4b4b"/><rect x="3" y="5" width="1" height="1" fill="#4b4b4b"/></svg><svg class="a" style="left:498px;top:520px" width="7" height="6" shape-rendering="crispEdges"><rect x="0" y="0" width="1" height="1" fill="#4b4b4b"/><rect x="6" y="0" width="1" height="1" fill="#4b4b4b"/><rect x="0" y="1" width="2" height="1" fill="#4b4b4b"/><rect x="5" y="1" width="2" height="1" fill="#4b4b4b"/><rect x="0" y="2" width="3" height="1" fill="#4b4b4b"/><rect x="4" y="2" width="3" height="1" fill="#4b4b4b"/><rect x="1" y="3" width="5" height="1" fill="#4b4b4b"/><rect x="2" y="4" width="3" height="1" fill="#4b4b4b"/><rect x="3" y="5" width="1" height="1" fill="#4b4b4b"/></svg><svg class="a" style="left:498px;top:556px" width="7" height="6" shape-rendering="crispEdges"><rect x="0" y="0" width="1" height="1" fill="#4b4b4b"/><rect x="6" y="0" width="1" height="1" fill="#4b4b4b"/><rect x="0" y="1" width="2" height="1" fill="#4b4b4b"/><rect x="5" y="1" width="2" height="1" fill="#4b4b4b"/><rect x="0" y="2" width="3" height="1" fill="#4b4b4b"/><rect x="4" y="2" width="3" height="1" fill="#4b4b4b"/><rect x="1" y="3" width="5" height="1" fill="#4b4b4b"/><rect x="2" y="4" width="3" height="1" fill="#4b4b4b"/><rect x="3" y="5" width="1" height="1" fill="#4b4b4b"/></svg>
<div class="t" style="left:37px;top:36px;;transform:scaleX(0.856)"><span class="u">E</span>nregistrer</div>
<div class="t" style="left:26px;top:76px;;transform:scaleX(0.881)">Eléments de la facture</div>
<div class="t" style="left:40px;top:97px;;transform:scaleX(0.982)">N°</div>
<div class="t" style="left:74px;top:97px;;transform:scaleX(0.854)">Code</div>
<div class="t" style="left:130px;top:97px;;transform:scaleX(0.907)">Description</div>
<div class="t" style="left:300px;top:97px;;transform:scaleX(0.912)">Quantité</div>
<div class="t" style="left:354px;top:97px;;transform:scaleX(0.935)">TVA</div>
<div class="t" style="left:420px;top:97px;;transform:scaleX(0.939)">Montant</div>
<div class="t" style="left:496px;top:97px;">Compte</div>
<div class="t" style="left:60px;top:116px;color:#fff">1</div>
<div class="t" style="left:130px;top:116px;color:#fff">Cotisation AVS 01.2017 -12.2017</div>
<div class="t" style="left:314px;top:116px;color:#fff;transform:scaleX(0.948)">1.0000</div>
<div class="t" style="left:443px;top:116px;color:#fff;transform:scaleX(0.909)">2 825.000</div>
<div class="t" style="left:495px;top:116px;color:#fff;transform:scaleX(0.972)">5270</div>
<div class="t" style="left:55px;top:220px;;transform:scaleX(0.933)"><span class="u">N</span>ouveau</div>
<div class="t" style="left:480px;top:216px;;transform:scaleX(0.935)">TVA</div>
<div class="t" style="left:479px;top:243px;">Remises</div>
<div class="t" style="left:480px;top:270px;;transform:scaleX(0.972)">Total</div>
<div class="t" style="left:635px;top:219px;">0.00</div>
<div class="t" style="left:635px;top:246px;">0.00</div>
<div class="t" style="left:614px;top:273px;">2 825.00</div>
<div class="t" style="left:27px;top:313px;;transform:scaleX(0.912)">Monnaie</div>
<div class="t" style="left:28px;top:340px;;transform:scaleX(0.869)">Cours (en monnaie locale)</div>
<div class="t" style="left:28px;top:367px;;transform:scaleX(0.885)">Quantité de monnaie étrangère cotée</div>
<div class="t" style="left:230px;top:317px;;transform:scaleX(0.903)">Monnaie locale</div>
<div class="t" style="left:257px;top:343px;color:#6d6d6d;transform:scaleX(0.91)">0.000000</div>
<div class="t" style="left:323px;top:345px;color:#6d6d6d;transform:scaleX(0.88)">Enregistrer le cours</div>
<div class="t" style="left:296px;top:370px;color:#6d6d6d">0</div>
<div class="t" style="left:26px;top:403px;;transform:scaleX(0.863)">Arrondir les montants</div>
<div class="t" style="left:26px;top:430px;">Catégorie</div>
<div class="t" style="left:26px;top:457px;">Objet</div>
<div class="t" style="left:26px;top:484px;">Classification</div>
<div class="t" style="left:26px;top:511px;">Compte créancier</div>
<div class="t" style="left:26px;top:547px;">Projet</div>
<div class="t" style="left:228px;top:407px;;transform:scaleX(0.908)">5 centimes</div>
<div class="t" style="left:229px;top:434px;;transform:scaleX(0.931)">Aucune...</div>
<div class="t" style="left:229px;top:461px;;transform:scaleX(0.937)">Aucun...</div>
<div class="t" style="left:229px;top:488px;;transform:scaleX(0.897)">À contrôler avec Catherine</div>
<div class="t" style="left:228px;top:551px;;transform:scaleX(0.923)">Non défini...</div>
<div class="t" style="left:15px;top:589px;"><span class="u">B</span>V</div>
<div class="t" style="left:44px;top:587px;;transform:scaleX(0.923)"><span class="u">D</span>étail</div>
<div class="t" style="left:86px;top:589px;">Réductions, <span class="u">r</span>èglements</div>
</div></body></html>
